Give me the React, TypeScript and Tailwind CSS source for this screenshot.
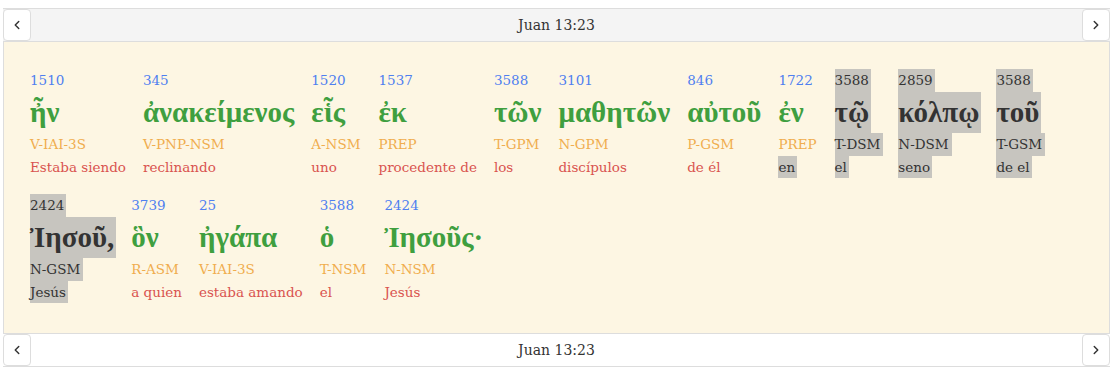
import { ChevronLeft, ChevronRight } from 'lucide-react'

type Word = {
  n: string
  g: string
  m: string
  t: string
  sel?: 'all' | 'trans'
}

const words: Word[] = [
  { n: '1510', g: 'ἦν', m: 'V-IAI-3S', t: 'Estaba siendo' },
  { n: '345', g: 'ἀνακείμενος', m: 'V-PNP-NSM', t: 'reclinando' },
  { n: '1520', g: 'εἷς', m: 'A-NSM', t: 'uno' },
  { n: '1537', g: 'ἐκ', m: 'PREP', t: 'procedente de' },
  { n: '3588', g: 'τῶν', m: 'T-GPM', t: 'los' },
  { n: '3101', g: 'μαθητῶν', m: 'N-GPM', t: 'discípulos' },
  { n: '846', g: 'αὐτοῦ', m: 'P-GSM', t: 'de él' },
  { n: '1722', g: 'ἐν', m: 'PREP', t: 'en', sel: 'trans' },
  { n: '3588', g: 'τῷ', m: 'T-DSM', t: 'el', sel: 'all' },
  { n: '2859', g: 'κόλπῳ', m: 'N-DSM', t: 'seno', sel: 'all' },
  { n: '3588', g: 'τοῦ', m: 'T-GSM', t: 'de el', sel: 'all' },
  { n: '2424', g: 'Ἰησοῦ,', m: 'N-GSM', t: 'Jesús', sel: 'all' },
  { n: '3739', g: 'ὃν', m: 'R-ASM', t: 'a quien' },
  { n: '25', g: 'ἠγάπα', m: 'V-IAI-3S', t: 'estaba amando' },
  { n: '3588', g: 'ὁ', m: 'T-NSM', t: 'el' },
  { n: '2424', g: 'Ἰησοῦς·', m: 'N-NSM', t: 'Jesús' },
]

const selBg = 'bg-[#c7c5bf] text-[#333]'

function NavBar({ bg }: { bg: string }) {
  return (
    <div className={`flex h-[34px] items-stretch border-y border-[#ddd] ${bg}`}>
      <button className="flex w-[28px] items-center justify-center rounded-[4px] border border-[#ddd] bg-white text-[#333]">
        <ChevronLeft size={14} strokeWidth={2.5} />
      </button>
      <div className="flex flex-1 items-center justify-center text-[14px] text-[#333]">Juan 13:23</div>
      <button className="flex w-[28px] items-center justify-center rounded-[4px] border border-[#ddd] bg-white text-[#333]">
        <ChevronRight size={14} strokeWidth={2.5} />
      </button>
    </div>
  )
}

function WordBlock({ w }: { w: Word }) {
  const all = w.sel === 'all'
  return (
    <div className="mr-[15px] flex flex-col items-start">
      <span className={`inline-block pr-[2px] text-[13.5px] leading-[23px] ${all ? selBg : 'text-[#4f7ff0]'}`}>{w.n}</span>
      <span
        className={`inline-block pr-[2px] text-[29px] font-bold leading-[41px] ${all ? selBg : 'text-[#3f9f3f]'}`}
        style={{ fontFamily: '"Liberation Serif", serif' }}
      >
        {w.g}
      </span>
      <span className={`inline-block pr-[3px] text-[13.5px] leading-[23px] ${all ? selBg : 'text-[#f0ad4e]'}`}>{w.m}</span>
      <span className={`inline-block pr-[2px] text-[13.5px] leading-[22px] ${all || w.sel === 'trans' ? selBg : 'text-[#d9534f]'}`}>{w.t}</span>
    </div>
  )
}

export default function App() {
  return (
    <div className="ml-[3px] mr-[2px] mt-2" style={{ fontFamily: '"DejaVu Serif", serif' }}>
      <NavBar bg="bg-[#f4f4f4]" />
      <div className="flex flex-wrap gap-y-[16px] border-x border-[#ddd] bg-[#fdf6e3] pb-[30px] pl-[26px] pr-[20px] pt-[27px]">
        {words.map((w, i) => (
          <WordBlock key={i} w={w} />
        ))}
      </div>
      <NavBar bg="bg-white" />
    </div>
  )
}
